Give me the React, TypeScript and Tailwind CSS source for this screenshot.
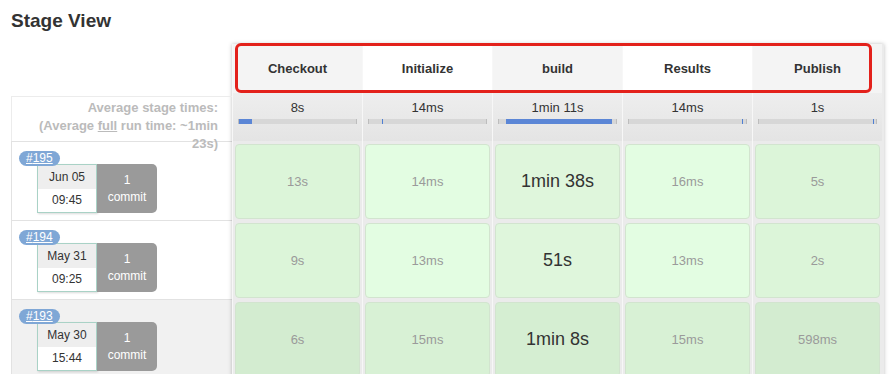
import React from "react";

type Stage = { name: string; avg: string; from: number; to: number };

const stages: Stage[] = [
  { name: "Checkout", avg: "8s", from: 0, to: 11 },
  { name: "Initialize", avg: "14ms", from: 11, to: 12.5 },
  { name: "build", avg: "1min 11s", from: 6, to: 97 },
  { name: "Results", avg: "14ms", from: 97, to: 98.5 },
  { name: "Publish", avg: "1s", from: 97.5, to: 99.5 },
];

const runs = [
  { id: 195, date: "Jun 05", time: "09:45", commits: 1, times: ["13s", "14ms", "1min 38s", "16ms", "5s"], hover: false },
  { id: 194, date: "May 31", time: "09:25", commits: 1, times: ["9s", "13ms", "51s", "13ms", "2s"], hover: false },
  { id: 193, date: "May 30", time: "15:44", commits: 1, times: ["6s", "15ms", "1min 8s", "15ms", "598ms"], hover: true },
];

// cell colours per column, normal vs hovered row
const cellBg = ["bg-[#dcf5d9]", "bg-[#e3fde2]", "bg-[#dff6dc]", "bg-[#e3fde2]", "bg-[#dcf5d9]"];
const cellBgHover = ["bg-[#d3ecd0]", "bg-[#d8f1d5]", "bg-[#d5eed2]", "bg-[#d8f1d5]", "bg-[#d3ecd0]"];

function RunLabel({ run }: { run: (typeof runs)[number] }) {
  return (
    <div
      className={`h-[79px] border-t border-l border-[#e2e2e2] pl-[7px] pt-[9px] ${
        run.hover ? "bg-[#f1f1f1]" : "bg-white"
      }`}
    >
      <div className="relative z-10 block w-fit rounded-full bg-[#7fa7d6] px-[7px] text-[12px] leading-[15px] text-white underline">
        #{run.id}
      </div>
      <div className="ml-[18px] -mt-[2px] flex h-[49px] w-[120px]">
        <div className="flex w-[60px] flex-col border border-[#a9d2c6] text-center text-[12px] text-[#333] shadow-[1px_1px_2px_rgba(0,0,0,0.15)]">
          <div className="flex flex-1 items-center justify-center bg-[#eeeeee]">{run.date}</div>
          <div className="flex flex-1 items-center justify-center bg-white">{run.time}</div>
        </div>
        <div className="flex w-[60px] flex-col items-center justify-center rounded-r-[5px] bg-[#9a9a9a] text-[12px] leading-[17px] text-white">
          <span>{run.commits}</span>
          <span>commit</span>
        </div>
      </div>
    </div>
  );
}

function AvgBar({ from, to }: { from: number; to: number }) {
  const thin = to - from < 3;
  return (
    <div className="relative mx-[5px] h-[5px] border-x border-[#bdbdbd] bg-[#d7d7d7]">
      <div
        className={`absolute top-0 h-full ${thin ? "bg-[#4f7fd3]" : "bg-[#5b86d6]"}`}
        style={{ left: `${from}%`, width: thin ? "1px" : `${to - from}%` }}
      />
    </div>
  );
}

export default function App() {
  return (
    <div className="h-[374px] w-[896px] overflow-hidden bg-white font-['Liberation_Sans',Arial,sans-serif] text-[#333]">
      <div className="h-[44px] pl-[11px] pt-[9px] text-[19px] font-bold leading-[24px]">Stage View</div>

      <div className="flex pl-[11px]">
        {/* left column: labels per run */}
        <div className="w-[221px] shrink-0">
          <div className="h-[49px]" />
          <div className="relative z-20 mt-[3px] h-[45px] border-t border-l border-[#ececec] pr-[14px] pt-[2px] text-right text-[13px] font-bold leading-[18px] text-[#bbbbbb]">
            Average stage times:
            <br />
            (Average <span className="underline">full</span> run time: ~1min
            <br />
            23s)
          </div>
          {runs.map((run) => (
            <RunLabel key={run.id} run={run} />
          ))}
        </div>

        {/* stage columns */}
        <div className="relative flex w-[652px] shrink-0 bg-[#ebebeb] shadow-[0_0_4px_rgba(0,0,0,0.25)]">
          {stages.map((stage, i) => (
            <div key={stage.name} className="w-[130px] shrink-0 border-l border-[#f7f7f7]">
              <div
                className={`flex h-[49px] items-center justify-center text-[13px] font-bold ${
                  i % 2 === 0 ? "bg-[#f4f4f4]" : "bg-white"
                }`}
              >
                {stage.name}
              </div>
              <div className="h-[48px] bg-gradient-to-b from-[#eeeeee] to-[#e4e4e4] pt-[7px]">
                <div className="mb-[3px] text-center text-[13px] leading-[16px]">{stage.avg}</div>
                <AvgBar from={stage.from} to={stage.to} />
              </div>
              {runs.map((run) => {
                const t = run.times[i];
                const big = t.includes("min") || i === 2;
                return (
                  <div key={run.id} className="h-[79px] px-[2px] pt-[3px] pb-[1px]">
                    <div
                      className={`flex h-full items-center justify-center rounded-[4px] border border-[#d2e4cf] ${
                        run.hover ? cellBgHover[i] : cellBg[i]
                      } ${big ? "text-[18px] text-[#333]" : "text-[13px] text-[#9a9a9a]"}`}
                    >
                      {t}
                    </div>
                  </div>
                );
              })}
            </div>
          ))}

          {/* red annotation around the stage headers */}
          <div className="pointer-events-none absolute left-[3px] top-[-1px] h-[50px] w-[637px] rounded-[6px] border-[3px] border-[#e3211b]" />
        </div>
      </div>
    </div>
  );
}
